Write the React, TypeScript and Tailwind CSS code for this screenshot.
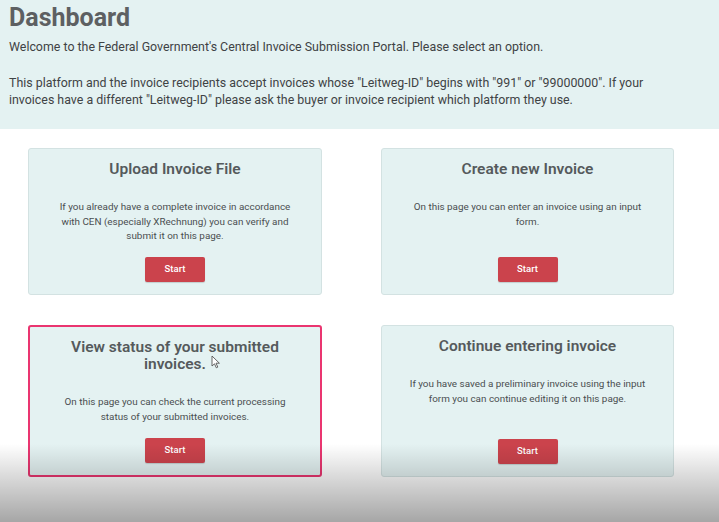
import React from "react";

const font = { fontFamily: "Roboto, 'Liberation Sans', sans-serif" };

function Card({
  title,
  body,
  highlight,
}: {
  title: React.ReactNode;
  body: React.ReactNode;
  highlight?: boolean;
}) {
  return (
    <div
      className={
        "flex-1 flex flex-col items-center bg-[#e4f2f2] rounded-[3px] px-4 pt-[12px] pb-[12px] " +
        (highlight ? "border-2 border-[#ea3570]" : "border border-[#d3e2e2]")
      }
    >
      <h2 className="text-[15.5px] leading-[17px] font-semibold text-[#555a5c] text-center">{title}</h2>
      <p className="mt-[22px] text-[9.9px] leading-[14.5px] text-[#4a4e50] text-center">{body}</p>
      <div className="flex-1" />
      <button className="w-[60px] h-[25px] bg-[#cb434c] rounded-[2px] text-white text-[9.5px] font-medium shadow-[0_1px_1px_rgba(0,0,0,0.15)]">
        Start
      </button>
    </div>
  );
}

export default function App() {
  return (
    <div className="relative w-[719px] h-[522px] bg-white overflow-hidden" style={font}>
      <div className="h-[129px] bg-[#e4f2f2] pl-[9px] pt-[3px] text-[#3f4345]">
        <h1 className="text-[25px] leading-[30px] font-bold text-[#5d6062]">Dashboard</h1>
        <p className="mt-[5px] text-[12.4px] leading-[17px]">
          Welcome to the Federal Government's Central Invoice Submission Portal. Please select an option.
        </p>
        <p className="mt-[19px] text-[12.4px] leading-[17px]">
          This platform and the invoice recipients accept invoices whose "Leitweg-ID" begins with "991" or "99000000". If your
          <br />
          invoices have a different "Leitweg-ID" please ask the buyer or invoice recipient which platform they use.
        </p>
      </div>

      <div className="grid grid-cols-[294px_293px] gap-x-[59px] gap-y-[30px] pl-[28px] pt-[19px]">
        <div className="h-[147px] flex flex-col">
          <Card
            title="Upload Invoice File"
            body={
              <>
                If you already have a complete invoice in accordance
                <br />
                with CEN (especially XRechnung) you can verify and
                <br />
                submit it on this page.
              </>
            }
          />
        </div>
        <div className="h-[147px] flex flex-col">
          <Card
            title="Create new Invoice"
            body={
              <>
                On this page you can enter an invoice using an input
                <br />
                form.
              </>
            }
          />
        </div>
        <div className="h-[152px] flex flex-col">
          <Card
            highlight
            title={
              <>
                View status of your submitted
                <br />
                invoices.
              </>
            }
            body={
              <>
                On this page you can check the current processing
                <br />
                status of your submitted invoices.
              </>
            }
          />
        </div>
        <div className="h-[152px] flex flex-col">
          <Card
            title="Continue entering invoice"
            body={
              <>
                If you have saved a preliminary invoice using the input
                <br />
                form you can continue editing it on this page.
              </>
            }
          />
        </div>
      </div>

      {/* mouse cursor */}
      <svg className="absolute left-[211px] top-[355px]" width="10" height="14" viewBox="0 0 10 14">
        <path d="M1 1 L1 11 L3.5 8.8 L5.3 12.8 L6.8 12.1 L5 8.2 L8.4 8.2 Z" fill="white" stroke="#555" strokeWidth="0.9" strokeLinejoin="round" />
      </svg>

      {/* video shading overlay */}
      <div className="pointer-events-none absolute left-0 right-0 bottom-0 h-[78px] bg-gradient-to-b from-transparent to-[rgba(0,0,0,0.35)]" />
    </div>
  );
}
